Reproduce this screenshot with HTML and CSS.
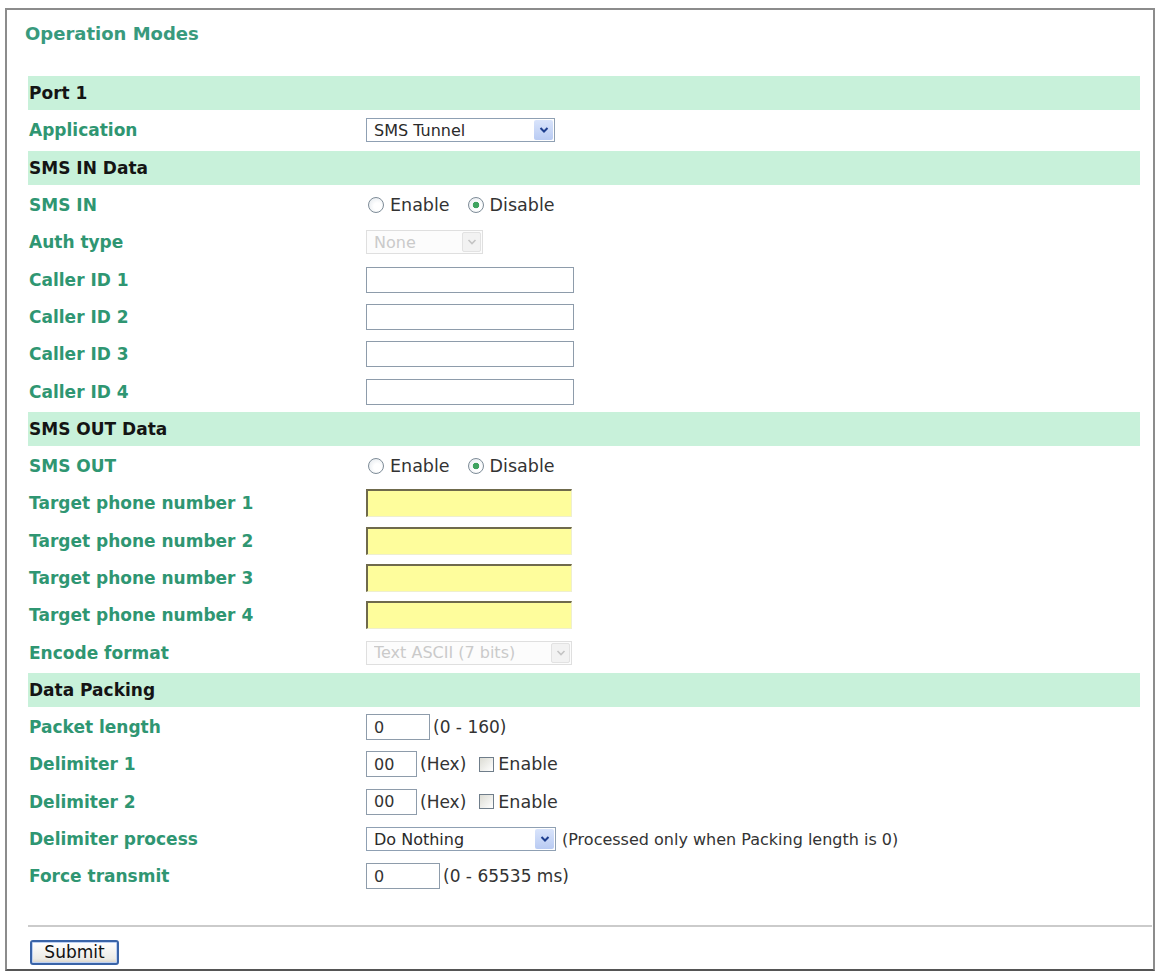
FILE: index.html
```html
<!DOCTYPE html>
<html lang="en">
<head>
<meta charset="utf-8">
<title>Operation Modes</title>
<link rel="stylesheet" href="styles.css">
</head>
<body>
<div class="frame">
  <h1 class="title">Operation Modes</h1>
  <form class="form">
    <div class="row band"><span class="band-label">Port 1</span></div>
    <div class="row">
      <span class="label">Application</span>
      <span class="field">
        <span class="select w189">
          <select><option>SMS Tunnel</option></select>
          <span class="arrow"><svg viewBox="0 0 10 8" width="10" height="8"><path d="M1.5 2 L5 5.5 L8.5 2" fill="none" stroke="#1e3f8f" stroke-width="2"/></svg></span>
        </span>
      </span>
    </div>
    <div class="row band"><span class="band-label">SMS IN Data</span></div>
    <div class="row">
      <span class="label">SMS IN</span>
      <span class="field">
        <label class="opt"><input type="radio" name="smsin">Enable</label>
        <label class="opt"><input type="radio" name="smsin" checked>Disable</label>
      </span>
    </div>
    <div class="row">
      <span class="label">Auth type</span>
      <span class="field">
        <span class="select w117 disabled">
          <select disabled><option>None</option></select>
          <span class="arrow"><svg viewBox="0 0 10 8" width="10" height="8"><path d="M1.5 2 L5 5.5 L8.5 2" fill="none" stroke="#c4c4c4" stroke-width="1.6"/></svg></span>
        </span>
      </span>
    </div>
    <div class="row"><span class="label">Caller ID 1</span><span class="field"><input class="text w208" type="text"></span></div>
    <div class="row"><span class="label">Caller ID 2</span><span class="field"><input class="text w208" type="text"></span></div>
    <div class="row"><span class="label">Caller ID 3</span><span class="field"><input class="text w208" type="text"></span></div>
    <div class="row"><span class="label">Caller ID 4</span><span class="field"><input class="text w208" type="text"></span></div>
    <div class="row band"><span class="band-label">SMS OUT Data</span></div>
    <div class="row">
      <span class="label">SMS OUT</span>
      <span class="field">
        <label class="opt"><input type="radio" name="smsout">Enable</label>
        <label class="opt"><input type="radio" name="smsout" checked>Disable</label>
      </span>
    </div>
    <div class="row"><span class="label">Target phone number 1</span><span class="field"><input class="yellow" type="text"></span></div>
    <div class="row"><span class="label">Target phone number 2</span><span class="field"><input class="yellow" type="text"></span></div>
    <div class="row"><span class="label">Target phone number 3</span><span class="field"><input class="yellow" type="text"></span></div>
    <div class="row"><span class="label">Target phone number 4</span><span class="field"><input class="yellow" type="text"></span></div>
    <div class="row">
      <span class="label">Encode format</span>
      <span class="field">
        <span class="select w206 disabled">
          <select disabled><option>Text ASCII (7 bits)</option></select>
          <span class="arrow"><svg viewBox="0 0 10 8" width="10" height="8"><path d="M1.5 2 L5 5.5 L8.5 2" fill="none" stroke="#c4c4c4" stroke-width="1.6"/></svg></span>
        </span>
      </span>
    </div>
    <div class="row band"><span class="band-label">Data Packing</span></div>
    <div class="row">
      <span class="label">Packet length</span>
      <span class="field"><input class="text w64" type="text" value="0"><span class="note">(0 - 160)</span></span>
    </div>
    <div class="row">
      <span class="label">Delimiter 1</span>
      <span class="field"><input class="text w51" type="text" value="00"><span class="note">(Hex)</span><label class="opt chk"><input type="checkbox">Enable</label></span>
    </div>
    <div class="row">
      <span class="label">Delimiter 2</span>
      <span class="field"><input class="text w51" type="text" value="00"><span class="note">(Hex)</span><label class="opt chk"><input type="checkbox">Enable</label></span>
    </div>
    <div class="row">
      <span class="label">Delimiter process</span>
      <span class="field">
        <span class="select w190">
          <select><option>Do Nothing</option></select>
          <span class="arrow"><svg viewBox="0 0 10 8" width="10" height="8"><path d="M1.5 2 L5 5.5 L8.5 2" fill="none" stroke="#1e3f8f" stroke-width="2"/></svg></span>
        </span>
        <span class="note wide">(Processed only when Packing length is 0)</span>
      </span>
    </div>
    <div class="row">
      <span class="label">Force transmit</span>
      <span class="field"><input class="text w74" type="text" value="0"><span class="note">(0 - 65535 ms)</span></span>
    </div>
  </form>
  <hr class="rule">
  <button class="submit" type="button">Submit</button>
</div>
</body>
</html>
```

FILE: styles.css
```css
* { box-sizing: border-box; }

html, body {
  margin: 0;
  padding: 0;
  background: #ffffff;
}

body {
  font-family: "DejaVu Sans", Verdana, sans-serif;
  color: #222;
}

.frame {
  margin: 8px 4px 0 5px;
  height: 963px;
  border: 2px solid #8c8c8c;
  border-bottom-color: #555;
  padding: 14px 1px 0 21px;
}

.title {
  margin: 0 0 32px -3px;
  font-size: 18px;
  line-height: 20px;
  font-weight: bold;
  color: #389a7d;
}

.form {
  display: flex;
  flex-direction: column;
  gap: 3px;
  width: 1112px;
}

.row {
  display: grid;
  grid-template-columns: 338px 1fr;
  align-items: center;
  height: 34.3px;
}

.band {
  background: #c8f1da;
}

.band-label {
  padding-left: 1px;
  font-size: 17px;
  font-weight: bold;
  color: #141414;
}

.label {
  padding-left: 1px;
  font-size: 17px;
  font-weight: bold;
  color: #2f9672;
}

.field {
  display: flex;
  align-items: center;
  font-size: 17px;
  color: #333;
}

/* selects */
.select {
  position: relative;
  display: inline-block;
  height: 24px;
}
.select select {
  appearance: none;
  -webkit-appearance: none;
  width: 100%;
  height: 100%;
  margin: 0;
  padding: 0 0 0 7px;
  border: 1px solid #8fa0b3;
  border-radius: 0;
  background: #fff;
  font-family: "DejaVu Sans", Verdana, sans-serif;
  font-size: 16px;
  color: #2a2a2a;
}
.select .arrow {
  position: absolute;
  top: 2px;
  right: 2px;
  width: 19px;
  height: 20px;
  display: flex;
  align-items: center;
  justify-content: center;
  background: linear-gradient(#d9e4fb, #b9cbf3);
  border-radius: 2px;
  pointer-events: none;
}
.select.disabled select {
  border-color: #d2d2d2;
  color: #b4b4b4;
  background: #fbfbfb;
}
.select.disabled .arrow {
  background: #f2f2f2;
  border: 1px solid #e2e2e2;
}
.w189 { width: 189px; }
.w190 { width: 190px; }
.w117 { width: 117px; }
.w206 { width: 206px; }

/* text inputs */
.text {
  height: 26px;
  margin: 0;
  padding: 0 0 0 7px;
  border: 1px solid #8e9cab;
  background: #fff;
  font-family: "DejaVu Sans", Verdana, sans-serif;
  font-size: 16px;
  color: #333;
}
.w208 { width: 208px; }
.w64 { width: 64px; }
.w51 { width: 51px; }
.w74 { width: 74px; }

.yellow {
  width: 206px;
  height: 28px;
  margin: 0;
  padding: 0;
  background: #fefd9c;
  border-style: solid;
  border-width: 2px 1px 1px 2px;
  border-color: #6f6a4c #efefcf #efefcf #6f6a4c;
}

.note {
  margin-left: 3px;
  white-space: nowrap;
}
.note.wide {
  margin-left: 6px;
  font-size: 16px;
}

/* radios and checkboxes */
.opt {
  display: inline-flex;
  align-items: center;
  gap: 6px;
  margin-right: 16px;
  font-size: 17.5px;
  color: #333;
}
.opt input[type="radio"] {
  appearance: none;
  -webkit-appearance: none;
  width: 16px;
  height: 16px;
  margin: 0 0 0 2px;
  border: 1px solid #7e8c98;
  border-radius: 50%;
  background: radial-gradient(circle at 60% 60%, #ffffff 30%, #dfe5ea 100%);
}
.opt input[type="radio"]:checked {
  background:
    radial-gradient(circle, #3fa35f 0 3px, transparent 3.6px),
    radial-gradient(circle at 60% 60%, #ffffff 30%, #dfe5ea 100%);
}
.opt.chk {
  gap: 4px;
  margin-left: 13px;
}
.opt input[type="checkbox"] {
  appearance: none;
  -webkit-appearance: none;
  width: 15px;
  height: 15px;
  margin: 0;
  border: 1px solid #6f7d8a;
  border-radius: 0;
  background: linear-gradient(135deg, #dcdcd4, #ffffff);
}

/* bottom */
.rule {
  margin: 31px 0 0 0;
  height: 2px;
  border: 0;
  background: #cbcbcb;
}

.submit {
  margin: 13px 0 0 2px;
  width: 89px;
  height: 25px;
  padding: 0;
  border: 2px solid #3a64a8;
  border-radius: 3px;
  background: linear-gradient(#ffffff, #ecebe6 80%, #d6d0c5);
  box-shadow: inset 0 0 0 1px #bcd0f2;
  font-family: "DejaVu Sans", Verdana, sans-serif;
  font-size: 17px;
  line-height: 20px;
  color: #111;
}
```
